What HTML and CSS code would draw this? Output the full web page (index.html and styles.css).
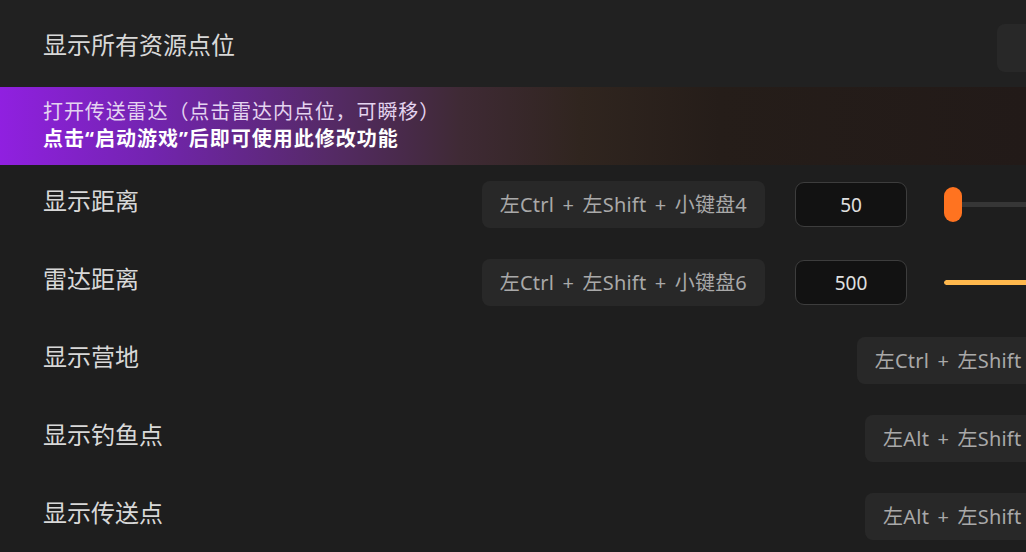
FILE: index.html
```html
<!DOCTYPE html>
<html lang="zh-CN">
<head>
<meta charset="utf-8">
<title>设置</title>
<link rel="stylesheet" href="styles.css">
</head>
<body>
<div class="page">
  <div class="row row-active">
    <span class="label">显示所有资源点位</span>
    <div class="controls">
      <span class="keys keys-empty"></span>
    </div>
  </div>

  <div class="banner">
    <div class="banner-title">打开传送雷达（点击雷达内点位，可瞬移）</div>
    <div class="banner-note">点击“启动游戏”后即可使用此修改功能</div>
  </div>

  <div class="row">
    <span class="label">显示距离</span>
    <div class="controls">
      <span class="keys">左Ctrl + 左Shift + 小键盘4</span>
      <div class="num">50</div>
      <div class="slider">
        <div class="track"><div class="fill fill-orange" style="width:2px"></div></div>
        <div class="thumb"></div>
      </div>
    </div>
  </div>

  <div class="row">
    <span class="label">雷达距离</span>
    <div class="controls">
      <span class="keys">左Ctrl + 左Shift + 小键盘6</span>
      <div class="num">500</div>
      <div class="slider">
        <div class="track"><div class="fill fill-yellow" style="width:100%"></div></div>
      </div>
    </div>
  </div>

  <div class="row">
    <span class="label">显示营地</span>
    <div class="controls">
      <span class="keys">左Ctrl + 左Shift + 小键盘8</span>
    </div>
  </div>

  <div class="row">
    <span class="label">显示钓鱼点</span>
    <div class="controls">
      <span class="keys">左Alt + 左Shift + 小键盘1</span>
    </div>
  </div>

  <div class="row">
    <span class="label">显示传送点</span>
    <div class="controls">
      <span class="keys">左Alt + 左Shift + 小键盘2</span>
    </div>
  </div>
</div>
</body>
</html>
```

FILE: styles.css
```css
html, body {
  margin: 0;
  padding: 0;
  background: #1e1e1e;
  overflow: hidden;
  width: 1026px;
  height: 552px;
}

body {
  font-family: "Noto Sans CJK SC", "Noto Sans", sans-serif;
  color: #d6d6d6;
}

.page {
  width: 1160px;
  padding-top: 9px;
}

.row {
  height: 78px;
  display: flex;
  align-items: center;
  justify-content: space-between;
  padding-left: 43px;
  padding-right: 20px;
  box-sizing: border-box;
}

.row-active {
  background: #212121;
  margin-top: -9px;
  height: 87px;
  padding-top: 9px;
}

.label {
  font-size: 24px;
  line-height: 32px;
  padding-bottom: 8px;
  color: #d8d8d8;
}

.controls {
  display: flex;
  align-items: center;
}

.keys {
  height: 47px;
  display: flex;
  align-items: center;
  padding: 0 18px 2px;
  box-sizing: border-box;
  background: #282828;
  border-radius: 8px;
  font-family: "Noto Sans", "Noto Sans CJK SC", sans-serif;
  font-size: 20px;
  word-spacing: 3px;
  letter-spacing: 0.2px;
  color: #a9a9a9;
  white-space: nowrap;
}

.keys-empty {
  width: 143px;
  height: 48px;
  padding: 0;
}

.num {
  width: 112px;
  height: 45px;
  margin-left: 30px;
  box-sizing: border-box;
  border: 1px solid #3d3d3d;
  border-radius: 9px;
  background: #121212;
  color: #e0e0e0;
  font-family: "Noto Sans", sans-serif;
  font-size: 19px;
  display: flex;
  align-items: center;
  justify-content: center;
  padding-top: 2px;
}

.slider {
  position: relative;
  width: 196px;
  margin-left: 37px;
  height: 35px;
  display: flex;
  align-items: center;
}

.track {
  width: 100%;
  height: 5px;
  background: #363636;
  border-radius: 3px;
  overflow: hidden;
}

.fill {
  height: 100%;
  border-radius: 3px;
}

.fill-orange { background: #ff9a3a; }
.fill-yellow { background: #ffb84d; }

.thumb {
  position: absolute;
  left: 0;
  top: 0;
  width: 18px;
  height: 35px;
  border-radius: 9px;
  background: #ff7320;
}

.banner {
  height: 78px;
  box-sizing: border-box;
  padding: 10px 0 0 43px;
  background: linear-gradient(90deg, #9020e0 0px, #7324b0 150px, #552a66 330px, #3f2a35 460px, #30251f 580px, #251d19 720px, #221a18 1026px);
  display: flex;
  flex-direction: column;
  gap: 1px;
}

.banner-title {
  font-size: 20px;
  line-height: 27px;
  letter-spacing: 0.9px;
  color: #e4d4f0;
}

.banner-note {
  font-family: "Noto Sans", "Noto Sans CJK SC", sans-serif;
  font-size: 20px;
  line-height: 27px;
  font-weight: 700;
  letter-spacing: 1px;
  color: #ffffff;
}
```
